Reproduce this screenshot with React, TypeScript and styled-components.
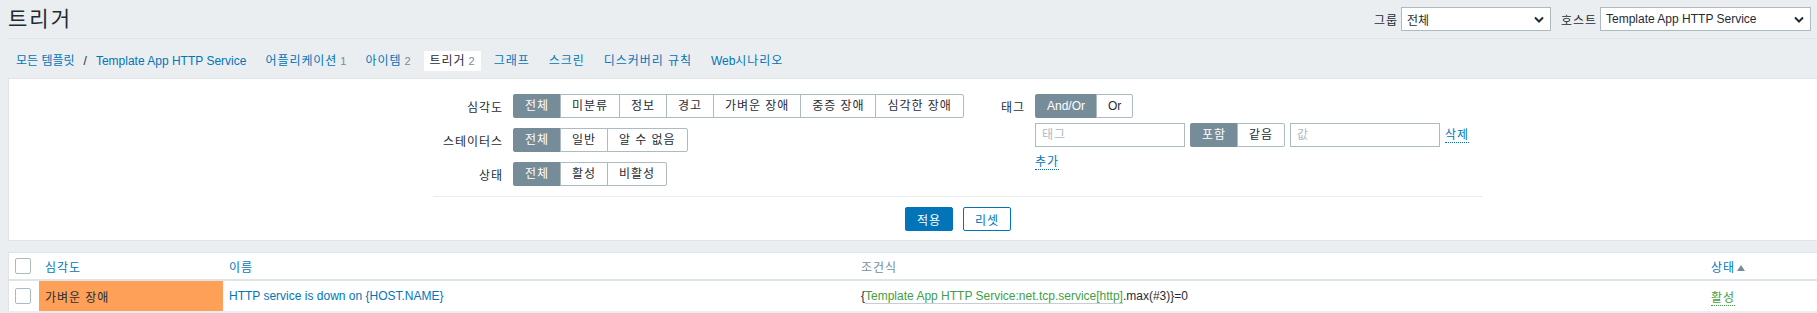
import React from "react";
import styled, { createGlobalStyle, css } from "styled-components";

const GlobalStyle = createGlobalStyle`
  html, body {
    margin: 0;
    padding: 0;
    background: #ebeef0;
    overflow: hidden;
  }
  body {
    font-family: "Liberation Sans", Arial, "Noto Sans CJK KR", sans-serif;
    font-size: 12px;
    color: #1f2c33;
  }
  * {
    box-sizing: border-box;
  }
`;

// hangul from the fallback font runs a bit narrow, widen it to the reference's spacing
const ko = css`
  letter-spacing: 0.95px;
`;

const Page = styled.div`
  padding-left: 8px;
`;

const Header = styled.header`
  display: flex;
  align-items: center;
  justify-content: space-between;
  height: 39px;
  padding-right: 6px;
  border-bottom: 1px solid #dfe4e7;
`;

const Title = styled.h1`
  margin: 0;
  font-size: 21px;
  font-weight: normal;
  line-height: 24px;
  letter-spacing: 2px;
  color: #1f2c33;
`;

const HeaderControls = styled.div`
  display: flex;
  align-items: center;
`;

const ControlLabel = styled.label`
  ${ko}
  margin: 0 3px 0 10px;
  color: #1f2c33;
`;

const Select = styled.div<{ $width: number }>`
  display: flex;
  align-items: center;
  justify-content: space-between;
  width: ${(p) => p.$width}px;
  height: 24px;
  padding: 0 6px 0 5px;
  background: #fff;
  border: 1px solid #acbbc2;
  color: #1f2c33;
`;

const Nav = styled.nav`
  display: flex;
  align-items: flex-start;
  gap: 7px;
  height: 39px;
  padding: 12px 0 0 2px;
`;

const Crumbs = styled.div`
  display: flex;
  height: 20px;
  line-height: 20px;
  padding: 0 6px;
`;

const Sep = styled.span`
  margin: 0 9px;
  color: #1f2c33;
`;

const Link = styled.a`
  color: #0275b8;
  text-decoration: none;
`;

const Tab = styled.a<{ $active?: boolean }>`
  ${ko}
  height: 20px;
  line-height: 20px;
  padding: 0 6px;
  text-decoration: none;
  color: ${(p) => (p.$active ? "#1f2c33" : "#0275b8")};
  background: ${(p) => (p.$active ? "#fff" : "transparent")};
`;

const Latin = styled.span`
  letter-spacing: 0;
`;

const Count = styled.span`
  margin-left: 3px;
  font-size: 11px;
  letter-spacing: 0;
  color: #768d99;
`;

const FilterPanel = styled.section`
  background: #fff;
  border: 1px solid #dfe4e7;
  border-right: 0;
  padding: 15px 0 9px 424px;
`;

const FilterForm = styled.div`
  width: 1050px;
`;

const Columns = styled.div`
  display: flex;
  height: 92px;
`;

const LeftColumn = styled.div`
  width: 530px;
  display: grid;
  grid-template-columns: 70px auto;
  grid-auto-rows: 24px;
  column-gap: 10px;
  row-gap: 10px;
  align-items: center;
  justify-items: start;
`;

const RightColumn = styled.div`
  display: grid;
  grid-template-columns: 62px auto;
  grid-template-rows: 24px 24px 20px;
  column-gap: 10px;
  row-gap: 5px;
  align-items: center;
  justify-items: start;
`;

const FieldLabel = styled.span`
  ${ko}
  justify-self: end;
  color: #1f2c33;
`;

const Field = styled.div`
  grid-column: 2;
  display: flex;
  align-items: center;
  gap: 5px;
`;

const Segmented = styled.div`
  display: inline-flex;
  height: 24px;
`;

const Segment = styled.span<{ $active?: boolean }>`
  ${ko}
  height: 24px;
  line-height: 22px;
  padding: 0 11px;
  margin-left: -1px;
  white-space: nowrap;
  border: 1px solid ${(p) => (p.$active ? "#768d99" : "#acbbc2")};
  background: ${(p) => (p.$active ? "#768d99" : "#fff")};
  color: ${(p) => (p.$active ? "#fff" : "#1f2c33")};
  &:first-child {
    margin-left: 0;
    border-radius: 2px 0 0 2px;
  }
  &:last-child {
    border-radius: 0 2px 2px 0;
  }
`;

const LatinSegment = styled(Segment)`
  letter-spacing: 0;
`;

const TextInput = styled.input`
  ${ko}
  width: 150px;
  height: 24px;
  padding: 0 6px;
  border: 1px solid #acbbc2;
  font: inherit;
  color: #1f2c33;
  background: #fff;
  &::placeholder {
    color: #acbbc2;
  }
`;

const ActionLink = styled.a`
  ${ko}
  color: #0275b8;
  text-decoration: none;
  line-height: 14px;
  border-bottom: 1px dotted #0275b8;
`;

const Divider = styled.div`
  height: 1px;
  margin-top: 10px;
  background: #ebeef0;
`;

const ButtonRow = styled.div`
  display: flex;
  justify-content: center;
  gap: 10px;
  margin-top: 10px;
`;

const Button = styled.button<{ $primary?: boolean }>`
  height: 24px;
  padding: 0 11px;
  border-radius: 2px;
  font: inherit;
  ${ko}
  border: 1px solid #0275b8;
  background: ${(p) => (p.$primary ? "#0275b8" : "#fff")};
  color: ${(p) => (p.$primary ? "#fff" : "#0275b8")};
`;

const Table = styled.table`
  width: 100%;
  margin-top: 11px;
  border-collapse: separate;
  border-spacing: 0;
  table-layout: fixed;
  background: #fff;
  border-top: 1px solid #dfe4e7;
  border-left: 1px solid #dfe4e7;
`;

const Th = styled.th`
  ${ko}
  height: 28px;
  padding: 0 6px;
  text-align: left;
  font-weight: normal;
  border-bottom: 2px solid #dfe4e7;
  color: #768d99;
  vertical-align: middle;
`;

const Td = styled.td<{ $bg?: string }>`
  height: 30px;
  padding: 0 6px;
  vertical-align: middle;
  background: ${(p) => p.$bg || "transparent"};
  white-space: nowrap;
`;

const SeverityCell = styled(Td)`
  ${ko}
`;

const Checkbox = styled.span`
  display: block;
  width: 16px;
  height: 16px;
  border: 1px solid #acbbc2;
  border-radius: 2px;
  background: #fff;
`;

const SortArrow = styled.span`
  display: inline-block;
  margin-left: 2px;
  border-left: 4px solid transparent;
  border-right: 4px solid transparent;
  border-bottom: 6px solid #768d99;
  vertical-align: 1px;
`;

const ItemKey = styled.span`
  color: #429e47;
  border-bottom: 1px solid #c5ced3;
`;

const Fn = styled.span`
  color: #1f2c33;
`;

const StatusLink = styled.a`
  ${ko}
  color: #429e47;
  text-decoration: none;
  border-bottom: 1px dotted #429e47;
`;

function Chevron() {
  return (
    <svg width="10" height="7" viewBox="0 0 10 7">
      <polyline points="1,1.5 5,5.5 9,1.5" fill="none" stroke="#1f2c33" strokeWidth="2" />
    </svg>
  );
}

const severities = ["전체", "미분류", "정보", "경고", "가벼운 장애", "중증 장애", "심각한 장애"];

export default function App() {
  return (
    <Page>
      <GlobalStyle />
      <Header>
        <Title>트리거</Title>
        <HeaderControls>
          <ControlLabel>그룹</ControlLabel>
          <Select $width={150}>
            <span>전체</span>
            <Chevron />
          </Select>
          <ControlLabel>호스트</ControlLabel>
          <Select $width={211}>
            Template App HTTP Service
            <Chevron />
          </Select>
        </HeaderControls>
      </Header>

      <Nav>
        <Crumbs>
          <Link>모든 템플릿</Link>
          <Sep>/</Sep>
          <Link>Template App HTTP Service</Link>
        </Crumbs>
        <Tab>
          어플리케이션<Count>1</Count>
        </Tab>
        <Tab>
          아이템<Count>2</Count>
        </Tab>
        <Tab $active>
          트리거<Count>2</Count>
        </Tab>
        <Tab>그래프</Tab>
        <Tab>스크린</Tab>
        <Tab>디스커버리 규칙</Tab>
        <Tab>
          <Latin>Web</Latin>시나리오
        </Tab>
      </Nav>

      <FilterPanel>
        <FilterForm>
          <Columns>
            <LeftColumn>
              <FieldLabel>심각도</FieldLabel>
              <Segmented>
                {severities.map((s, i) => (
                  <Segment key={s} $active={i === 0}>
                    {s}
                  </Segment>
                ))}
              </Segmented>
              <FieldLabel>스테이터스</FieldLabel>
              <Segmented>
                <Segment $active>전체</Segment>
                <Segment>일반</Segment>
                <Segment>알 수 없음</Segment>
              </Segmented>
              <FieldLabel>상태</FieldLabel>
              <Segmented>
                <Segment $active>전체</Segment>
                <Segment>활성</Segment>
                <Segment>비활성</Segment>
              </Segmented>
            </LeftColumn>
            <RightColumn>
              <FieldLabel>태그</FieldLabel>
              <Segmented>
                <LatinSegment $active>And/Or</LatinSegment>
                <LatinSegment>Or</LatinSegment>
              </Segmented>
              <Field>
                <TextInput readOnly placeholder="태그" />
                <Segmented>
                  <Segment $active>포함</Segment>
                  <Segment>같음</Segment>
                </Segmented>
                <TextInput readOnly placeholder="값" />
                <ActionLink>삭제</ActionLink>
              </Field>
              <Field>
                <ActionLink>추가</ActionLink>
              </Field>
            </RightColumn>
          </Columns>
          <Divider />
          <ButtonRow>
            <Button $primary>적용</Button>
            <Button>리셋</Button>
          </ButtonRow>
        </FilterForm>
      </FilterPanel>

      <Table>
        <colgroup>
          <col style={{ width: 30 }} />
          <col style={{ width: 184 }} />
          <col style={{ width: 632 }} />
          <col style={{ width: 850 }} />
          <col />
        </colgroup>
        <thead>
          <tr>
            <Th>
              <Checkbox />
            </Th>
            <Th>
              <Link>심각도</Link>
            </Th>
            <Th>
              <Link>이름</Link>
            </Th>
            <Th>조건식</Th>
            <Th>
              <Link>상태</Link>
              <SortArrow />
            </Th>
          </tr>
        </thead>
        <tbody>
          <tr>
            <Td>
              <Checkbox />
            </Td>
            <SeverityCell $bg="#ffa059">가벼운 장애</SeverityCell>
            <Td>
              <Link>HTTP service is down on {"{HOST.NAME}"}</Link>
            </Td>
            <Td>
              {"{"}
              <ItemKey>Template App HTTP Service:net.tcp.service[http]</ItemKey>
              <Fn>.max(#3)</Fn>
              {"}=0"}
            </Td>
            <Td>
              <StatusLink>활성</StatusLink>
            </Td>
          </tr>
        </tbody>
      </Table>
    </Page>
  );
}
